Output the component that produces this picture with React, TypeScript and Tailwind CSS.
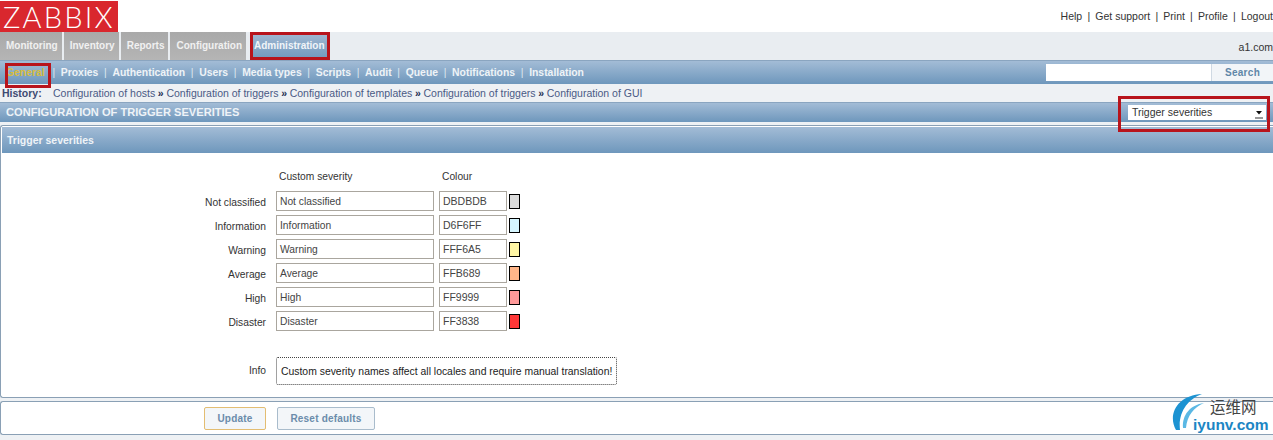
const font = { fontFamily: '"Liberation Sans", Arial, sans-serif' }

const tabs = ['Monitoring', 'Inventory', 'Reports', 'Configuration']
const subMenu = ['Proxies', 'Authentication', 'Users', 'Media types', 'Scripts', 'Audit', 'Queue', 'Notifications', 'Installation']
const history = ['Configuration of hosts', 'Configuration of triggers', 'Configuration of templates', 'Configuration of triggers', 'Configuration of GUI']
const topLinks = ['Help', 'Get support', 'Print', 'Profile', 'Logout']

const severities = [
  { name: 'Not classified', code: 'DBDBDB', swatch: 'bg-[#dbdbdb]' },
  { name: 'Information', code: 'D6F6FF', swatch: 'bg-[#d6f6ff]' },
  { name: 'Warning', code: 'FFF6A5', swatch: 'bg-[#fff6a5]' },
  { name: 'Average', code: 'FFB689', swatch: 'bg-[#ffb689]' },
  { name: 'High', code: 'FF9999', swatch: 'bg-[#ff9999]' },
  { name: 'Disaster', code: 'FF3838', swatch: 'bg-[#ff3838]' },
]

function Header() {
  return (
    <div className="flex h-8 items-start justify-between bg-white pt-px">
      <div className="flex h-[31px] w-[118px] items-center bg-[#d9272e] pl-[3px] text-[29px] leading-none tracking-[2.2px] text-white" style={{ fontFamily: 'Lato, sans-serif', fontWeight: 300 }}>
        ZABBIX
      </div>
      <div className="flex items-center pt-[9px] text-[10.5px] leading-3 text-[#333]">
        {topLinks.map((link, i) => (
          <span key={link} className="flex items-center">
            {i > 0 && <span className="px-[5.2px]">|</span>}
            <span>{link}</span>
          </span>
        ))}
      </div>
    </div>
  )
}

function MainMenu() {
  return (
    <div className="flex h-7 items-stretch justify-between bg-[#e9edf1]">
      <div className="flex items-stretch">
        {tabs.map((tab) => (
          <div key={tab} className="mr-[2px] flex items-center bg-gradient-to-b from-[#a9a9a9] to-[#b5b5b5] pb-[2px] pl-[6px] pr-[4px] text-[10px] font-bold text-[#f1f1f1]">
            {tab}
          </div>
        ))}
        <div className="ml-[2px] flex items-center bg-gradient-to-b from-[#a3bad3] to-[#6f98bd] pb-[2px] pl-[4px] pr-[5px] text-[10px] font-bold text-[#f1f5f9]">
          Administration
        </div>
      </div>
      <div className="pt-[9px] text-[10.5px] leading-3 text-[#333]">a1.com</div>
    </div>
  )
}

function SubMenu() {
  return (
    <div className="flex h-6 items-center justify-between border-t border-[#8aa5c0] bg-gradient-to-b from-[#a3bcd6] to-[#6e97bc] pl-[6px]">
      <div className="flex items-center text-[10.4px] font-bold text-[#eef3f7]">
        <span className="mr-[2px] text-[#d8bd3f]">General</span>
        {subMenu.map((item) => (
          <span key={item} className="flex items-center">
            <span className="px-[5.7px] font-normal text-[#dfe8f0]">|</span>
            <span>{item}</span>
          </span>
        ))}
      </div>
      <div className="flex h-[17px] items-stretch">
        <div className="w-[165px] bg-white" />
        <div className="flex w-[62px] items-center justify-center border-l border-[#cfd9e3] bg-[#f2f5f8] text-[10px] font-bold tracking-[0.3px] text-[#5f87a8]">
          Search
        </div>
      </div>
    </div>
  )
}

function HistoryBar() {
  return (
    <div className="flex h-[18px] items-center bg-[#eef1f4] pl-[2px] pt-[2px] text-[10.5px] text-[#4a5a85]">
      <span className="w-[51px] font-bold text-[#3e4a72]">History:</span>
      {history.map((item, i) => (
        <span key={i} className="flex items-center">
          {i > 0 && <span className="px-[2.7px] font-bold text-[#222c50]">»</span>}
          <span>{item}</span>
        </span>
      ))}
    </div>
  )
}

function TitleBar() {
  return (
    <div className="flex h-5 items-center justify-between border-t border-[#8aa5c0] bg-gradient-to-b from-[#a3bcd6] to-[#6e97bc] pl-[6px]">
      <span className="text-[11.1px] font-bold text-[#eef3f7]">CONFIGURATION OF TRIGGER SEVERITIES</span>
      <div className="mr-[7px] flex h-[15px] w-[138px] items-center justify-between bg-white pl-1 pr-[3px] text-[10.5px] text-[#333]">
        <span>Trigger severities</span>
        <svg width="8" height="12" viewBox="0 0 8 12"><path d="M1 4h6L4 7.5z" fill="#111" /><path d="M0 11h8" stroke="#999" strokeWidth="2" /></svg>
      </div>
    </div>
  )
}

function SeverityRow({ name, code, swatch }: { name: string; code: string; swatch: string }) {
  return (
    <div className="flex h-6 items-center">
      <span className="w-[264px] pt-[4px] text-right text-[10.25px] text-[#333]">{name}</span>
      <div className="ml-[10px] flex h-5 w-[158px] items-center border border-[#aaa69e] bg-white pl-[3px] pt-[2px] text-[10.25px] text-[#444]">{name}</div>
      <div className="ml-[5px] flex h-5 w-[68px] items-center border border-[#aaa69e] bg-white pl-[3px] pt-[2px] text-[10.5px] text-[#444]">{code}</div>
      <div className={`ml-[2px] h-[15px] w-[11px] border border-black ${swatch}`} />
    </div>
  )
}

function SeverityPanel() {
  return (
    <div className="mt-[3px] h-[273px] rounded-l-[3px] border border-r-0 border-[#8aa0b5] bg-white pl-px pt-px">
      <div className="flex h-[26px] items-center bg-gradient-to-b from-[#a3bcd6] to-[#6e97bc] pl-[5px] pt-[2px] text-[10.5px] font-bold text-[#eef3f7]">
        Trigger severities
      </div>
      <div className="flex h-[34px] items-end pb-[3px] text-[10.25px] text-[#333]">
        <span className="ml-[277px] w-[163px]">Custom severity</span>
        <span>Colour</span>
      </div>
      <div className="mt-[2px]">
        {severities.map((s) => (
          <SeverityRow key={s.name} {...s} />
        ))}
      </div>
      <div className="mt-[24px] flex items-center">
        <span className="w-[264px] text-right text-[10.25px] text-[#333]">Info</span>
        <div className="ml-[10px] flex h-7 w-[341px] items-center rounded-[2px] border border-dotted border-[#444] pl-[4px] pt-[2px] text-[10.4px] text-[#222]">
          Custom severity names affect all locales and require manual translation!
        </div>
      </div>
    </div>
  )
}

function Footer() {
  return (
    <div className="mt-[3px] flex h-[34px] items-center rounded-l-[3px] border border-r-0 border-[#8aa0b5] bg-white pl-[203px] pt-px">
      <button className="h-[23px] w-[62px] rounded-[2px] border border-[#e3bd72] bg-[#f3f6f9] text-[10px] font-bold tracking-[0.2px] text-[#6b8cab]">Update</button>
      <button className="ml-[11px] h-[23px] w-[98px] rounded-[2px] border border-[#a9bccc] bg-[#f3f6f9] text-[10px] font-bold tracking-[0.2px] text-[#6b8cab]">Reset defaults</button>
    </div>
  )
}

function Watermark() {
  return (
    <div className="absolute left-[1169px] top-[392px] h-[44px] w-[104px]">
      <svg className="absolute left-0 top-0" width="44" height="44" viewBox="0 0 44 44" fill="none">
        <path d="M7 38C-2 22 9 3 33 2 19 7 9 20 11 38z" fill="#1d93d2" />
        <path d="M14 36C13 23 21 13 35 11 25 15 18 24 17 36z" fill="#5bb8e4" />
      </svg>
      <span className="absolute left-[41px] top-[4px] text-[15.5px] leading-[20px] text-[#444]" style={{ fontFamily: '"Noto Sans CJK SC", sans-serif' }}>运维网</span>
      <span className="absolute left-[24px] top-[24px] text-[15.5px] font-bold leading-[18px] text-[#1c86c4]" style={{ fontFamily: '"Liberation Sans", sans-serif' }}>iyunv.com</span>
    </div>
  )
}

export default function App() {
  return (
    <div className="relative h-[440px] w-[1273px] overflow-hidden bg-[#eef1f4]" style={font}>
      <Header />
      <MainMenu />
      <SubMenu />
      <HistoryBar />
      <TitleBar />
      <SeverityPanel />
      <Footer />

      {/* red annotation boxes drawn over the screenshot */}
      <div className="absolute left-[250px] top-[32px] h-[28px] w-[80px] border-[3px] border-[#b8141c]" />
      <div className="absolute left-[5px] top-[63px] h-[25px] w-[46px] border-[3px] border-[#b8141c]" />
      <div className="absolute left-[1118px] top-[96px] h-[36px] w-[152px] border-[3px] border-[#b8141c]" />

      <Watermark />
    </div>
  )
}
